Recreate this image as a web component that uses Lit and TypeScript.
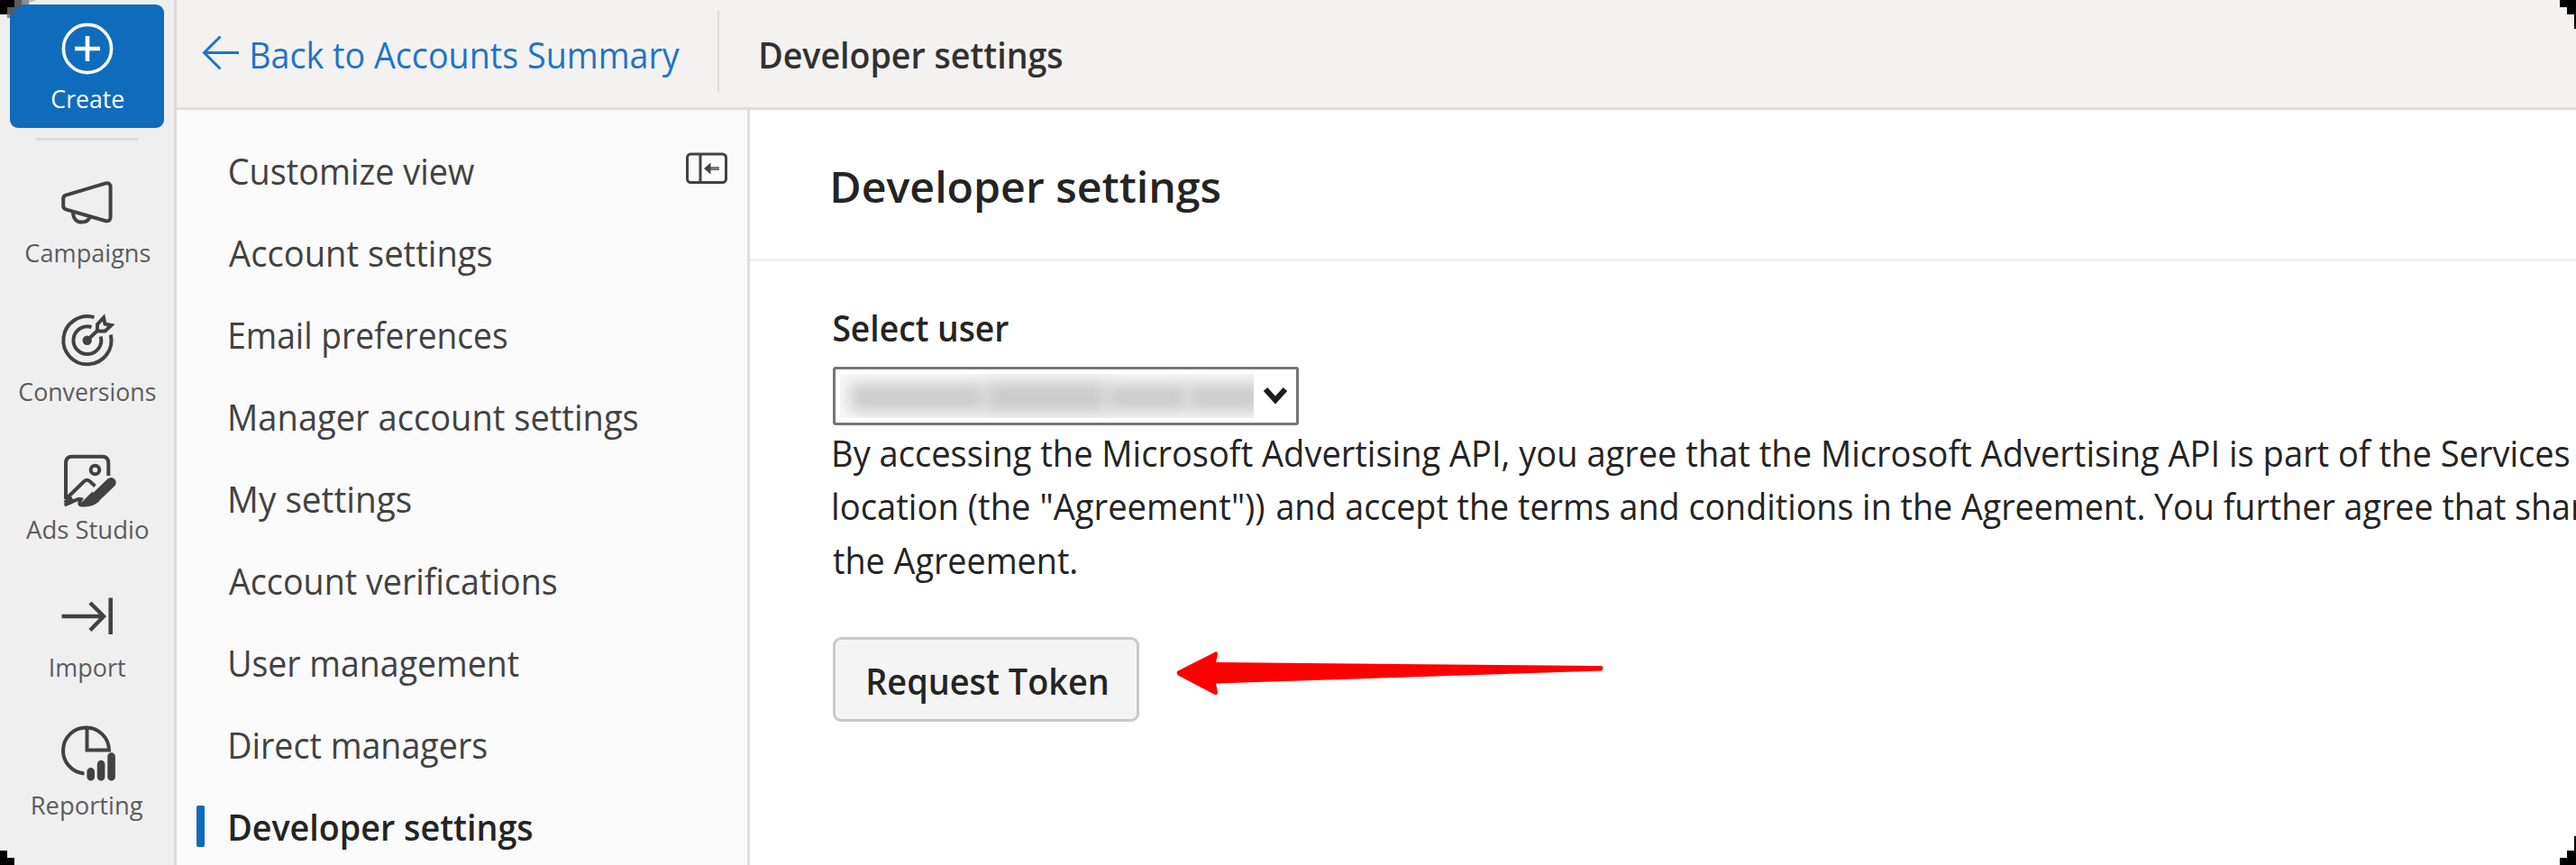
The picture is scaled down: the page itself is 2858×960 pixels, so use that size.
import { LitElement, html, css, svg } from "lit";
import { customElement, property } from "lit/decorators.js";
import { classMap } from "lit/directives/class-map.js";

/** One line of text condensed or widened to a given ink width. */
@customElement("fit-text")
class FitText extends LitElement {
  @property() text = "";
  @property({ type: Number }) ink = 0;

  static styles = css`
    :host { display: block; flex: none; white-space: pre; }
    .line { display: inline-block; transform-origin: 0 50%; vertical-align: top; }
  `;

  updated() {
    const line = this.renderRoot.querySelector(".line") as HTMLElement;
    const cs = getComputedStyle(this);
    const ctx = document.createElement("canvas").getContext("2d")!;
    ctx.font = `${cs.fontWeight} ${cs.fontSize} ${cs.fontFamily}`;
    const m = ctx.measureText(this.text);
    const natural = m.actualBoundingBoxRight + m.actualBoundingBoxLeft;
    const k = this.ink / natural;
    line.style.transform = `translate(${m.actualBoundingBoxLeft * k * 0.65}px, 1.5px) scaleX(${k})`;
    this.style.width = `${this.ink}px`;
  }

  render() {
    return html`<span class="line">${this.text}</span>`;
  }
}

const icons = {
  create: svg`<circle cx="34" cy="34" r="26.6" stroke-width="3.6"/><path d="M34 20v28M20 34h28" stroke-width="4.6"/>`,
  campaigns: svg`<path d="M7.2 29.5Q7.2 26.6 10 25.7L53.5 12.6Q59.6 11 59.6 17V49.5Q59.6 55.6 53.5 54L10 41.4Q7.2 40.4 7.2 37.6Z"/><path d="M18 44c0 7.500 4 11.600 9.500 11.600s8.500-3 9.500-6.600"/>`,
  conversions: svg`<path d="M41.500 8.200A26.600 26.600 0 1 0 59.800 27.500"/><path d="M38.500 19A15.400 15.400 0 1 0 48.700 29.500"/><circle cx="33.700" cy="33.800" r="5.200" fill="currentColor" stroke="none"/><path d="M33.700 33.800L46 22M45 23.500V16L52 8.500L53.500 15.500L60.500 17L53.500 23.500Z"/>`,
  studio: svg`<path d="M10 57V17Q10 9.800 17 9.800H50Q57.300 9.800 57.300 17V31"/><circle cx="42.500" cy="24.500" r="4.800"/><path d="M10.500 56.500L30.500 37Q33.500 34.500 36.500 37L42.500 42.500"/><path d="M60.200 38.500L43 55" stroke-width="11" stroke-linecap="round"/><path d="M39.500 48.500L26.500 61.500Q25 65.500 29.500 65.500Q40 66 47.500 59Z" fill="currentColor" stroke="none"/><path d="M8.500 60.500L17 55.500M8.500 63.500Q15 61 20 58.500T27 57Q23 63 28 63.500"/>`,
  import: svg`<path d="M5.500 33H51M37 18L52 33L37 48.500" stroke-width="4.400"/><path d="M59.700 12.500V53" stroke-width="4.600"/>`,
  reporting: svg`<path d="M30.500 54.400A25.500 25.500 0 1 1 58 28.500H33.500V4"/><path d="M37.700 52.200V58.300M49.100 44V58.300M60.600 35.500V58.300" stroke-width="8.600" stroke-linecap="round"/>`,
};

const railItems = [
  { icon: icons.campaigns, label: "Campaigns", ink: 138 },
  { icon: icons.conversions, label: "Conversions", ink: 151 },
  { icon: icons.studio, label: "Ads Studio", ink: 136 },
  { icon: icons.import, label: "Import", ink: 84 },
  { icon: icons.reporting, label: "Reporting", ink: 123 },
];

const navItems = [
  { label: "Customize view", ink: 272 },
  { label: "Account settings", ink: 291 },
  { label: "Email preferences", ink: 307 },
  { label: "Manager account settings", ink: 452 },
  { label: "My settings", ink: 200.5 },
  { label: "Account verifications", ink: 363 },
  { label: "User management", ink: 321 },
  { label: "Direct managers", ink: 284.5 },
  { label: "Developer settings", ink: 335.5, active: true },
];

@customElement("app-root")
class AppRoot extends LitElement {
  static styles = css`
    :host {
      display: block; position: relative; width: 2858px; height: 960px; overflow: hidden;
      font-family: "Open Sans", "Noto Sans", sans-serif; font-size: 39.4px; line-height: 60px;
      color: #242424; background: #fff;
    }
    * { box-sizing: border-box; }
    svg { display: block; flex: none; fill: none; stroke: currentColor; stroke-width: 4; }
    .page { display: flex; height: 960px; }
    .rail {
      flex: none; width: 196px; background: #efefef; border-right: 3px solid #dcdcdc;
      display: flex; flex-direction: column; align-items: center; padding-top: 5px;
      font-size: 27.5px; line-height: 36px; color: #424242;
    }
    .create {
      width: 171px; height: 137px; border-radius: 9px; background: #0f6cbd; color: #fff;
      display: flex; flex-direction: column; align-items: center; padding-top: 14.5px;
    }
    .create svg { margin-bottom: 2.5px; }
    .rule { width: 113px; height: 3px; margin: 11px 0 31.7px; background: #dcdcdc; }
    .tool { height: 153.3px; display: flex; flex-direction: column; align-items: center; padding-top: 3px; color: #424242; }
    .tool fit-text { margin-top: 2.6px; color: #5c5c5c; }
    .body { flex: 1; min-width: 0; display: flex; flex-direction: column; }
    .top {
      height: 122px; flex: none; background: #f3f2f1; border-bottom: 3px solid #dfdfde;
      display: flex; align-items: center;
    }
    .back { display: flex; align-items: center; gap: 12px; padding: 0 43px 2px 28px; color: #1f74c8; }
    .sep { width: 2px; height: 90px; margin-bottom: 5px; background: #dddcdb; }
    .crumb { padding: 0 0 2px 45px; font-weight: 600; color: #323130; }
    .cols { flex: 1; min-height: 0; display: flex; }
    .nav { flex: none; width: 636px; background: #fafafa; border-right: 3px solid #dedede; padding-top: 21px; }
    .item { height: 90.95px; display: flex; align-items: center; padding: 0 22px 0 22px; color: #424242; }
    .bar { width: 9px; height: 46px; margin: 2px 26.5px 0 0; border-radius: 2px; }
    .item.active { font-weight: 600; color: #242424; }
    .item.active .bar { background: #0f6cbd; }
    .toggle { margin: 0 0 3px auto; stroke-width: 3; }
    .main { flex: 1; min-width: 0; overflow: hidden; }
    .heading {
      height: 167.5px; border-bottom: 3px solid #efefef; padding: 2px 0 0 91px;
      display: flex; align-items: center; font-size: 47.6px; font-weight: 600;
    }
    .form { padding: 42.5px 0 0 92px; }
    .label { font-weight: 600; }
    .select {
      width: 517px; height: 65px; margin-top: 14.5px; border: 3px solid #767676; border-radius: 3px;
      display: flex; align-items: center; justify-content: space-between; padding: 0 9px 0 5px;
    }
    .redacted {
      width: 459px; height: 49px; overflow: hidden; background: #f8f8f8;
      display: flex; align-items: center; justify-content: flex-end; padding-top: 4px;
    }
    .smudge { flex: none; height: 32px; background: #cacaca; filter: blur(9px); }
    .s1 { width: 150px; }
    .s2 { width: 135px; height: 36px; }
    .s3 { width: 90px; }
    .s4 { width: 85px; margin-right: -12px; }
    .terms { line-height: 59.7px; }
    .split { display: flex; gap: 14px; }
    .button {
      width: 340px; height: 94px; margin-top: 56.5px; display: flex; align-items: center; justify-content: center;
      border: 3px solid #c9c9c9; border-radius: 9px; background: #f4f4f4; font-weight: 600;
    }
    .pointer { position: absolute; left: 1300px; top: 718px; stroke: none; fill: #fe0000; }
    .corners { position: absolute; left: 0; top: 0; stroke: none; fill: #000; }
  `;

  render() {
    return html`
      <div class="page">
        <nav class="rail">
          <div class="create">
            <svg width="68" height="68">${icons.create}</svg>
            <fit-text text="Create" .ink=${79.5}></fit-text>
          </div>
          <div class="rule"></div>
          ${railItems.map((t) => html`
            <div class="tool">
              <svg width="68" height="68">${t.icon}</svg>
              <fit-text .text=${t.label} .ink=${t.ink}></fit-text>
            </div>`)}
        </nav>
        <div class="body">
          <header class="top">
            <div class="back">
              <svg width="42" height="42"><path d="M2 20.5H41M20.5 2.5L2.5 20.5L20.5 38.5" stroke-width="3"/></svg>
              <fit-text text="Back to Accounts Summary" .ink=${475}></fit-text>
            </div>
            <div class="sep"></div>
            <fit-text class="crumb" text="Developer settings" .ink=${334.5}></fit-text>
          </header>
          <div class="cols">
            <aside class="nav">
              ${navItems.map((n, i) => html`
                <div class=${classMap({ item: true, active: !!n.active })}>
                  <div class="bar"></div>
                  <fit-text .text=${n.label} .ink=${n.ink}></fit-text>
                  ${i === 0 ? html`
                    <svg class="toggle" width="46" height="36">
                      <rect x="1.5" y="2" width="43" height="31.5" rx="4"/>
                      <path d="M16 2V33.5"/>
                      <path d="M24 18H37" stroke="#777" stroke-width="4"/>
                      <path d="M20 18L27.5 11.5V24.5Z" fill="currentColor" stroke="none"/>
                    </svg>` : ""}
                </div>`)}
            </aside>
            <main class="main">
              <div class="heading"><fit-text text="Developer settings" .ink=${429.5}></fit-text></div>
              <div class="form">
                <fit-text class="label" text="Select user" .ink=${195}></fit-text>
                <div class="select">
                  <div class="redacted">
                    <div class="smudge s1"></div><div class="smudge s2"></div>
                    <div class="smudge s3"></div><div class="smudge s4"></div>
                  </div>
                  <svg width="28" height="22"><path d="M3 4L14 16L25 4" stroke-width="6" stroke="#1c1c1c"/></svg>
                </div>
                <div class="terms">
                  <fit-text text="By accessing the Microsoft Advertising API, you agree that the Microsoft Advertising API is part of the Services" .ink=${1925}></fit-text>
                  <div class="split">
                    <fit-text text='location (the "Agreement"))' .ink=${478}></fit-text>
                    <fit-text text="and accept the terms and conditions in the Agreement. You further agree that shar" .ink=${1451}></fit-text>
                  </div>
                  <fit-text text="the Agreement." .ink=${270}></fit-text>
                </div>
                <div class="button"><fit-text text="Request Token" .ink=${265}></fit-text></div>
              </div>
            </main>
          </div>
        </div>
      </div>
      <svg class="pointer" width="482" height="58">
        <path d="M6 27Q5 29.500 7 31.500L46 52Q51 54.500 51 50L49 40.500L476 26.500Q478.500 26 478.500 23.500T476 21L49 17L51 8Q51 3.500 46.500 6.500Z"/>
      </svg>
      <svg class="corners" width="2858" height="960">
        <path d="M0 0H16V8H8V16H0ZM2840 0H2858V32H2856V16H2848V8H2840ZM0 944H8V952H16V960H0ZM2858 928V960H2840V952H2848V944H2856V928Z"/>
        <path d="M16 0H24V8H16V16H8V8H16Z" fill="#5a5a5a"/>
        <path d="M24 0H32V5H24ZM8 16H11V20H8Z" fill="#8c8c8c"/>
        <path d="M32 0H40L32 3Z" fill="#b8b8b8"/>
      </svg>
    `;
  }
}
